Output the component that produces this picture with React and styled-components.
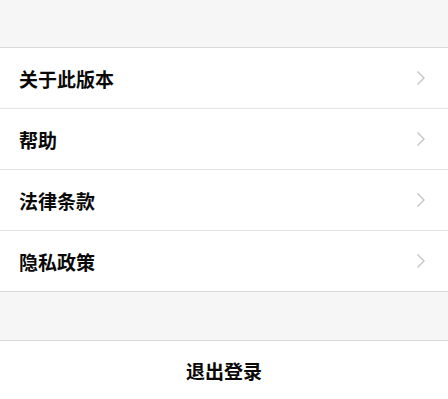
import styled, { createGlobalStyle } from 'styled-components';

const GlobalStyle = createGlobalStyle`
  html, body {
    margin: 0;
    padding: 0;
    background: #f6f6f6;
  }
  body {
    font-family: "Noto Sans CJK SC", "Noto Sans", sans-serif;
  }
`;

const items = ["关于此版本", "帮助", "法律条款", "隐私政策"];

const Chevron = () => (
  <svg width="10" height="16" viewBox="0 0 10 16">
    <path d="M1.5 1.5 L8 8 L1.5 14.5" fill="none" stroke="#c4c4c4" strokeWidth="1.4" />
  </svg>
);

const App = () => {
  return (
    <Page>
      <GlobalStyle />
      <Spacer $height={47} />
      <List>
        {items.map((label) => (
          <Row key={label}>
            <Label>{label}</Label>
            <Chevron />
          </Row>
        ))}
      </List>
      <Spacer $height={48} />
      <LogoutButton>退出登录</LogoutButton>
    </Page>
  );
};

const Page = styled.div`
  width: 448px;
  min-height: 399px;
  background: #f6f6f6;
`;

const Spacer = styled.div`
  height: ${(p) => p.$height}px;
`;

const List = styled.div`
  background: #fff;
  border-top: 1px solid #d9d9d9;
  border-bottom: 1px solid #d9d9d9;
`;

const Row = styled.div`
  display: flex;
  align-items: center;
  justify-content: space-between;
  height: 60px;
  padding: 0 22px 0 19px;
  & + & {
    border-top: 1px solid #e6e6e6;
  }
`;

const Label = styled.span`
  font-size: 19px;
  font-weight: 600;
  color: #0a0a0a;
`;

const LogoutButton = styled.div`
  display: flex;
  align-items: center;
  justify-content: center;
  height: 58px;
  background: #fff;
  border-top: 1px solid #d9d9d9;
  font-size: 19px;
  font-weight: 600;
  color: #0a0a0a;
  padding-bottom: 2px;
`;

export default App;
